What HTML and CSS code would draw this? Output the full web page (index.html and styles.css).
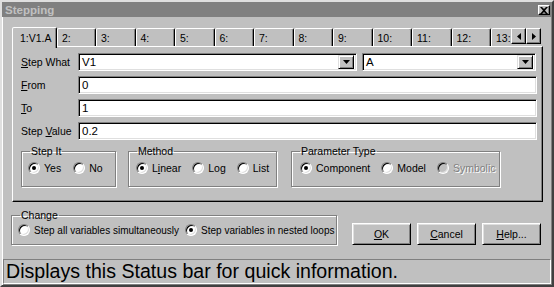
FILE: index.html
```html
<!DOCTYPE html>
<html lang="en">
<head>
  <meta charset="UTF-8" />
  <title>Stepping</title>
  <link rel="stylesheet" href="styles.css">
</head>
<body>

  <div class="window">
    <div class="titlebar">
      <span class="title">Stepping</span>
      <button class="close-btn">
        <svg width="8" height="7" viewBox="0 0 8 7"><path d="M0 0h2l2 2 2-2h2L5 3.5 8 7H6L4 5 2 7H0l3-3.5z" fill="#000"/></svg>
      </button>
    </div>

    <div class="dialog">
      <div class="tabstrip">
        <div class="tabs">
          <div class="tab active">1:V1.A</div>
          <div class="tab">2:</div>
          <div class="tab">3:</div>
          <div class="tab">4:</div>
          <div class="tab">5:</div>
          <div class="tab">6:</div>
          <div class="tab">7:</div>
          <div class="tab">8:</div>
          <div class="tab">9:</div>
          <div class="tab">10:</div>
          <div class="tab">11:</div>
          <div class="tab">12:</div>
          <div class="tab">13:</div>
        </div>
        <div class="scroll-btns">
          <button class="arrow-btn"><svg width="4" height="7" viewBox="0 0 4 7"><path d="M4 0v7L0 3.5z" fill="#000"/></svg></button>
          <button class="arrow-btn"><svg width="4" height="7" viewBox="0 0 4 7"><path d="M0 0v7l4-3.5z" fill="#000"/></svg></button>
        </div>
      </div>

      <div class="panel">
        <div class="field-row first">
          <label class="field-label"><u>S</u>tep What</label>
          <div class="combo wide">
            <span class="combo-text">V1</span>
            <span class="drop-btn"><svg width="7" height="4" viewBox="0 0 7 4"><path d="M0 0h7L3.5 4z" fill="#000"/></svg></span>
          </div>
          <div class="combo narrow">
            <span class="combo-text">A</span>
            <span class="drop-btn"><svg width="7" height="4" viewBox="0 0 7 4"><path d="M0 0h7L3.5 4z" fill="#000"/></svg></span>
          </div>
        </div>
        <div class="field-row">
          <label class="field-label"><u>F</u>rom</label>
          <div class="textbox">0</div>
        </div>
        <div class="field-row">
          <label class="field-label"><u>T</u>o</label>
          <div class="textbox">1</div>
        </div>
        <div class="field-row">
          <label class="field-label">Step <u>V</u>alue</label>
          <div class="textbox">0.2</div>
        </div>

        <div class="groups">
          <fieldset class="group step-it">
            <legend>Step It</legend>
            <div class="options">
              <span class="opt"><span class="radio on"></span><span>Yes</span></span>
              <span class="opt"><span class="radio"></span><span>No</span></span>
            </div>
          </fieldset>
          <fieldset class="group method">
            <legend>Method</legend>
            <div class="options">
              <span class="opt"><span class="radio on"></span><span>L<u>i</u>near</span></span>
              <span class="opt"><span class="radio"></span><span>Log</span></span>
              <span class="opt"><span class="radio"></span><span>List</span></span>
            </div>
          </fieldset>
          <fieldset class="group param">
            <legend>Parameter Type</legend>
            <div class="options">
              <span class="opt"><span class="radio on"></span><span>Component</span></span>
              <span class="opt"><span class="radio"></span><span>Model</span></span>
              <span class="opt disabled"><span class="radio"></span><span>Symbolic</span></span>
            </div>
          </fieldset>
        </div>
      </div>

      <div class="bottom-row">
        <fieldset class="group change">
          <legend>Change</legend>
          <div class="options">
            <span class="opt"><span class="radio"></span><span>Step all variables simultaneously</span></span>
            <span class="opt"><span class="radio on"></span><span>Step variables in nested loops</span></span>
          </div>
        </fieldset>
        <div class="buttons">
          <button class="btn"><u>O</u>K</button>
          <button class="btn"><u>C</u>ancel</button>
          <button class="btn"><u>H</u>elp...</button>
        </div>
      </div>
    </div>

    <div class="statusbar">Displays this Status bar for quick information.</div>
  </div>

</body>
</html>
```

FILE: styles.css
```css
* {
  box-sizing: border-box;
}

body {
  margin: 0;
  background-color: #c0c0c0;
  font-family: "Liberation Sans", Arial, sans-serif;
  font-size: 10px;
  color: #000;
  overflow: hidden;
}

u {
  text-decoration: underline;
  text-underline-offset: 1px;
}

.window {
  width: 554px;
  height: 287px;
  border: 2px solid;
  border-color: #dfdfdf #404040 #404040 #dfdfdf;
  box-shadow: inset 1px 1px #fff, inset -1px -1px #808080;
  background: #c0c0c0;
  display: flex;
  flex-direction: column;
}

.titlebar {
  height: 15px;
  background: #808080;
  display: flex;
  align-items: center;
  justify-content: space-between;
  padding: 0 2px 0 3px;
}

.title {
  color: #c0c0c0;
  font-weight: bold;
  font-size: 11.5px;
}

.close-btn {
  width: 12px;
  height: 10px;
  padding: 0;
  margin-top: 1px;
  border: 1px solid;
  border-color: #fff #000 #000 #fff;
  box-shadow: inset -1px -1px #808080;
  background: #c0c0c0;
  display: flex;
  align-items: center;
  justify-content: center;
}

.dialog {
  padding: 10px 9px 0 10px;
}

/* tabs */
.tabstrip {
  display: flex;
  align-items: flex-end;
  height: 19px;
  position: relative;
  z-index: 2;
}

.tabs {
  display: flex;
  align-items: flex-end;
  width: 499px;
  overflow: hidden;
  height: 21px;
  margin-bottom: -2px;
}

.tab {
  flex: none;
  width: 39.5px;
  height: 18px;
  padding: 3px 0 0 4px;
  border: 1px solid;
  border-bottom: none;
  border-color: #fff #000 transparent #fff;
  border-radius: 2px 2px 0 0;
  box-shadow: inset -1px 0 #808080;
  font-size: 10.5px;
  line-height: 12px;
  margin-bottom: 2px;
  background: #c0c0c0;
}

.tab.active {
  width: 45px;
  height: 21px;
  padding: 4px 0 0 7px;
  margin-bottom: 0;
  margin-right: -2px;
  position: relative;
  z-index: 1;
}

.tab.active + .tab {
  margin-left: 2px;
  width: 39px;
}

.scroll-btns {
  display: flex;
  margin-bottom: 2px;
}

.arrow-btn {
  width: 15px;
  height: 16px;
  padding: 0;
  border: 1px solid;
  border-color: #fff #000 #000 #fff;
  box-shadow: inset -1px -1px #808080;
  background: #c0c0c0;
  display: flex;
  align-items: center;
  justify-content: center;
}

/* tab page */
.panel {
  width: 531px;
  height: 156px;
  border: 1px solid;
  border-color: #fff #000 #000 #fff;
  box-shadow: inset -1px -1px #808080;
  padding: 6px 5px 0 7px;
  position: relative;
  z-index: 1;
}

.field-row {
  display: flex;
  align-items: center;
  height: 18px;
  margin-top: 5px;
}

.field-row.first {
  margin-top: 0;
  margin-bottom: 1px;
}

.field-label {
  width: 58px;
  flex: none;
  padding-left: 1px;
  font-size: 10.5px;
}

.textbox,
.combo {
  height: 18px;
  background: #fff;
  border: 1px solid;
  border-color: #808080 #fff #fff #808080;
  box-shadow: inset 1px 1px #000, inset -1px -1px #dfdfdf;
  padding: 2px 3px 0 3px;
  line-height: 13px;
  font-size: 11.5px;
}

.textbox {
  width: 459px;
}

.combo {
  display: flex;
  justify-content: space-between;
  padding: 2px 2px 0 3px;
}

.combo.wide {
  width: 279px;
}

.combo.narrow {
  width: 174px;
  margin-left: 5px;
}

.drop-btn {
  width: 16px;
  height: 14px;
  margin-top: -1px;
  border: 1px solid;
  border-color: #dfdfdf #000 #000 #dfdfdf;
  box-shadow: inset 1px 1px #fff, inset -1px -1px #808080;
  background: #c0c0c0;
  display: flex;
  align-items: center;
  justify-content: center;
}

/* group boxes */
.groups {
  display: flex;
  margin-top: 5px;
  margin-left: 1px;
}

.group {
  margin: 0;
  padding: 0 6px 0 6px;
  border: 1px solid #808080;
  box-shadow: inset 1px 1px #fff, 1px 1px #fff;
  min-width: 0;
}

.group legend {
  padding: 0 1px;
  margin-left: 2px;
  line-height: 12px;
  font-size: 10.5px;
}

.step-it {
  width: 95px;
  height: 42px;
}

.method {
  width: 149px;
  height: 42px;
  margin-left: 12px;
}

.param {
  width: 209px;
  height: 42px;
  margin-left: 14px;
}

.options {
  display: flex;
  align-items: center;
  gap: 12px;
  padding-top: 5px;
  font-size: 10.5px;
}

.method .options {
  padding-left: 1px;
  gap: 11px;
}

.param .options {
  padding-left: 2px;
  gap: 11px;
}

.opt {
  display: flex;
  align-items: center;
  gap: 4px;
  white-space: nowrap;
}

.opt.disabled {
  color: #808080;
  text-shadow: 1px 1px #fff;
}

.radio {
  width: 12px;
  height: 12px;
  flex: none;
  border-radius: 50%;
  background: #fff;
  border: 1px solid;
  border-color: #808080 #fff #fff #808080;
  box-shadow: inset 1px 1px #000, inset -1px -1px #dfdfdf;
  display: flex;
  align-items: center;
  justify-content: center;
}

.radio.on::after {
  content: "";
  width: 4px;
  height: 4px;
  border-radius: 50%;
  background: #000;
}

.opt.disabled .radio {
  background: #c0c0c0;
}

/* bottom */
.bottom-row {
  display: flex;
  align-items: flex-end;
  margin-top: 7px;
  margin-left: -1px;
}

.change {
  width: 326px;
  height: 36px;
}

.change .options {
  padding-top: 3px;
  gap: 6px;
  font-size: 10px;
}

.buttons {
  display: flex;
  gap: 6px;
  margin-left: 15px;
}

.btn {
  width: 59px;
  height: 22px;
  padding: 0;
  font-family: inherit;
  font-size: 10.5px;
  color: #000;
  background: #c0c0c0;
  border: 1px solid;
  border-color: #fff #000 #000 #fff;
  box-shadow: inset 1px 1px #dfdfdf, inset -1px -1px #808080;
}

.statusbar {
  margin: 14px 1px 0 1px;
  height: 25px;
  border: 1px solid;
  border-color: #808080 #fff #fff #808080;
  font-size: 19.6px;
  line-height: 22px;
  padding-left: 2px;
  white-space: nowrap;
}
```
